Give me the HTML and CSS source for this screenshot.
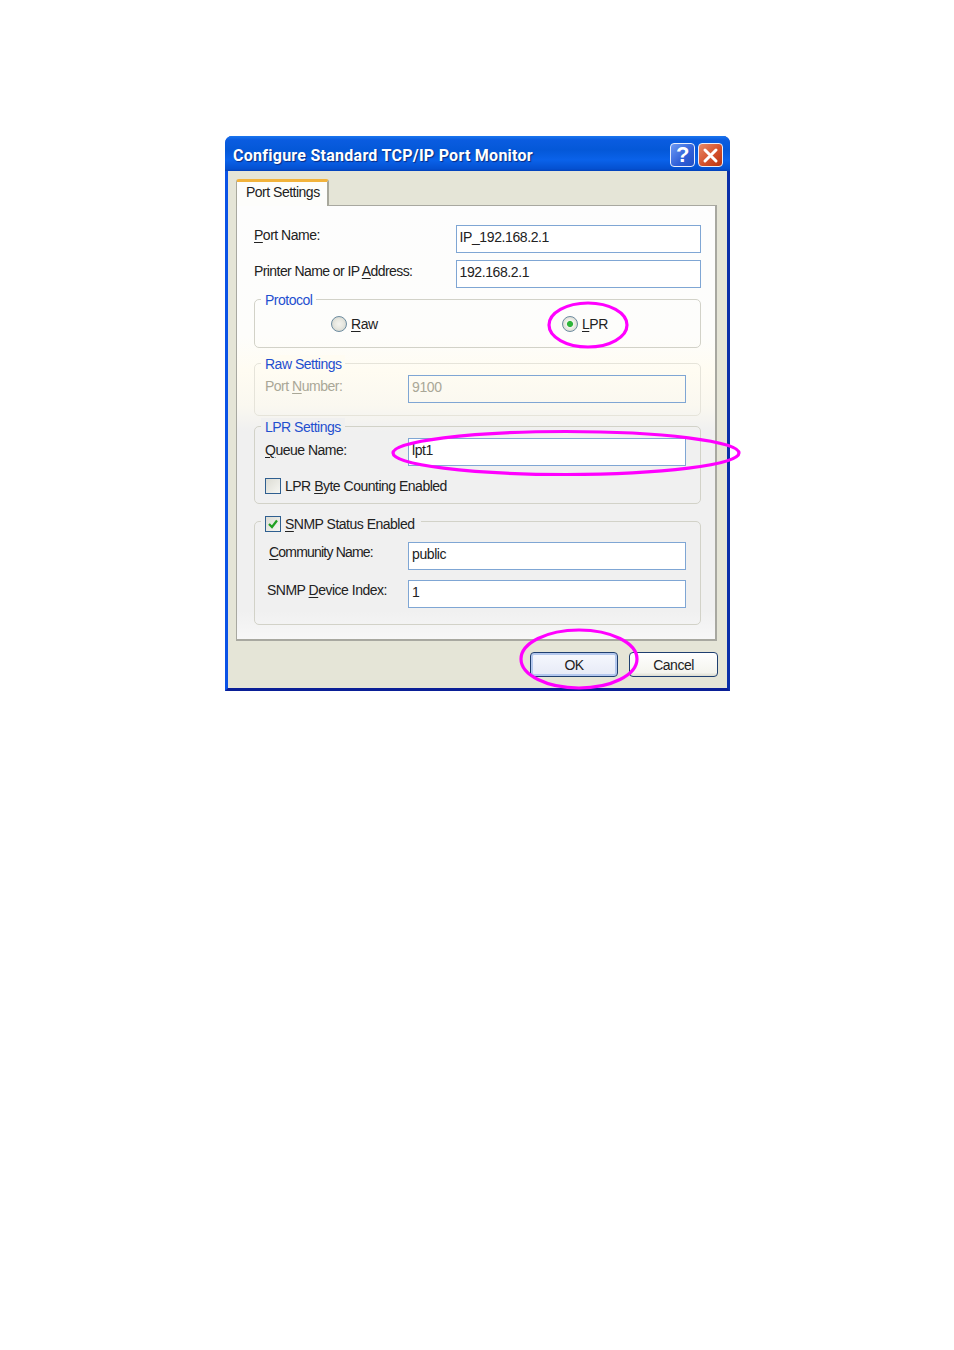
FILE: index.html
```html
<!DOCTYPE html>
<html lang="en">
  <head>
    <meta charset="UTF-8" />
    <title>Configure Standard TCP/IP Port Monitor</title>
    <link rel="stylesheet" href="styles.css">
  </head>
  <body>
    <!-- DIALOG -->
    <div class="window">
      <div class="titlebar">
        <span class="title">Configure Standard TCP/IP Port Monitor</span>
        <span class="title-btn title-btn-help">?</span>
        <span class="title-btn title-btn-close">
          <svg width="17" height="17" viewBox="0 0 17 17">
            <path d="M3 3 L14 14 M14 3 L3 14" stroke="#fff" stroke-width="3" stroke-linecap="round" fill="none" />
          </svg>
        </span>
      </div>

      <div class="body">
        <div class="tabs">
          <div class="tab">Port Settings</div>
        </div>

        <div class="panel">
          <div class="row row-top">
            <span class="label label-wide"><u>P</u>ort Name:</span>
            <div class="field field-wide">IP_192.168.2.1</div>
          </div>
          <div class="row row-next">
            <span class="label label-wide label-low label-tight">Printer Name or IP <u>A</u>ddress:</span>
            <div class="field field-wide">192.168.2.1</div>
          </div>

          <!-- PROTOCOL -->
          <div class="group group-protocol">
            <span class="legend">Protocol</span>
            <div class="radios">
              <span class="radio-item"><span class="radio"></span><span><u>R</u>aw</span></span>
              <span class="radio-item"><span class="radio radio-on"></span><span><u>L</u>PR</span></span>
            </div>
          </div>

          <!-- RAW -->
          <div class="group group-raw">
            <span class="legend">Raw Settings</span>
            <div class="row">
              <span class="label label-low disabled">Port <u>N</u>umber:</span>
              <div class="field field-disabled">9100</div>
            </div>
          </div>

          <!-- LPR -->
          <div class="group group-lpr">
            <span class="legend">LPR Settings</span>
            <div class="row">
              <span class="label label-lower"><u>Q</u>ueue Name:</span>
              <div class="field">lpt1</div>
            </div>
            <div class="check-row">
              <span class="check"></span>
              <span class="check-text">LPR <u>B</u>yte Counting Enabled</span>
            </div>
          </div>

          <!-- SNMP -->
          <div class="group group-snmp">
            <span class="legend legend-check">
              <span class="check">
                <svg width="14" height="14" viewBox="0 0 14 14">
                  <path d="M3 7 L6 10 L11 3.5" stroke="#21a121" stroke-width="2.2" fill="none" />
                </svg>
              </span>
              <span class="legend-text"><u>S</u>NMP Status Enabled</span>
            </span>
            <div class="row">
              <span class="label label-community"><u>C</u>ommunity Name:</span>
              <div class="field">public</div>
            </div>
            <div class="row row-snmp">
              <span class="label label-device">SNMP <u>D</u>evice Index:</span>
              <div class="field">1</div>
            </div>
          </div>
        </div>

        <div class="buttons">
          <div class="btn btn-default">OK</div>
          <div class="btn">Cancel</div>
        </div>
      </div>
    </div>

    <!-- HIGHLIGHT RINGS -->
    <svg class="marks" width="954" height="1350" viewBox="0 0 954 1350">
      <ellipse cx="588" cy="325" rx="39" ry="22" />
      <ellipse cx="566" cy="453" rx="173" ry="21.5" />
      <ellipse cx="579" cy="659" rx="58" ry="29" />
    </svg>
  </body>
</html>
```

FILE: styles.css
```css
/* PAGE */
html,
body {
  margin: 0;
  padding: 0;
  background: #fff;
}
*,
*::before,
*::after {
  box-sizing: border-box;
}
body {
  position: relative;
  width: 954px;
  height: 1350px;
  padding: 136px 0 0 225px;
  font-family: "Liberation Sans", Arial, sans-serif;
  font-size: 14px;
  letter-spacing: -0.5px;
  color: #222;
}
u {
  text-underline-offset: 2px;
}

/* WINDOW */
.window {
  width: 505px;
  height: 555px;
  display: flex;
  flex-direction: column;
  background: #0a50e0;
  border-radius: 7px 7px 0 0;
  border-left: 3px solid #0a52e6;
  border-right: 3px solid #0a2fa8;
  border-bottom: 3px solid #0a1f96;
}

/* TITLE BAR */
.titlebar {
  height: 35px;
  margin: 0 -3px;
  padding: 7px 7px 0 8px;
  display: flex;
  align-items: flex-start;
  gap: 3px;
  border-radius: 7px 7px 0 0;
  background: linear-gradient(#1a76ee 0, #0a5ce0 4px, #0458d8 14px, #0a62ea 24px, #0450d0 33px, #0340b8 35px);
}
.title {
  flex: 1;
  font-family: Roboto, "Liberation Sans", sans-serif;
  font-weight: bold;
  font-size: 16px;
  line-height: 26px;
  letter-spacing: 0.26px;
  color: #fff;
  text-shadow: 1px 1px 1px #0a2a80;
}
.title-btn {
  width: 25px;
  height: 24px;
  display: flex;
  align-items: center;
  justify-content: center;
  border: 1px solid #e8eefc;
  border-radius: 4px;
}
.title-btn-help {
  background: linear-gradient(135deg, #6c9af4, #2f5fd8 60%, #2450c4);
  font-weight: bold;
  font-size: 22px;
  color: #fff;
}
.title-btn-close {
  background: linear-gradient(135deg, #e88a68, #d4512c 55%, #b83410);
}

/* BODY */
.body {
  flex: 1;
  padding: 0 10px 0 8px;
  background: #e5e5d7;
}

/* TABS */
.tabs {
  height: 34px;
  padding-top: 8px;
  display: flex;
}
.tab {
  position: relative;
  z-index: 1;
  width: 93px;
  height: 27px;
  padding: 0 0 0 9px;
  line-height: 20px;
  background: #fdfdfb;
  border-top: 3px solid #f2b33c;
  border-left: 1px solid #a8a89c;
  border-right: 2px solid #a8a89c;
  border-radius: 3px 3px 0 0;
}

/* PANEL */
.panel {
  height: 436px;
  padding: 0 14px 0 17px;
  border: 1px solid #a8a8a0;
  border-right-width: 2px;
  border-bottom-width: 2px;
  background: linear-gradient(#fdfdfd 0, #fdfdfb 130px, #fffcf2 165px, #faf8f0 200px, #f0f0f0 225px, #f0f0f0 405px, #f8f8f8 436px);
}

/* ROWS */
.row {
  display: flex;
  align-items: flex-start;
}
.row-top {
  margin-top: 19px;
}
.row-next {
  margin-top: 7px;
}
.row-snmp {
  margin-top: 10px;
}
.label {
  width: 143px;
  line-height: 20px;
}
.label-wide {
  width: 202px;
}
.label-tight {
  letter-spacing: -0.58px;
}
.label-low {
  padding-top: 1px;
}
.label-lower {
  padding-top: 2px;
}
.label-community {
  padding-left: 4px;
  letter-spacing: -0.8px;
}
.label-device {
  padding-left: 2px;
}
.disabled {
  color: #a9a797;
}
.field {
  width: 278px;
  height: 28px;
  padding: 0 0 4px 3px;
  line-height: 22px;
  letter-spacing: -0.4px;
  background: #fff;
  border: 1px solid #7fa6d4;
}
.field-wide {
  width: 246px;
}
.field-disabled {
  background: transparent;
  color: #a9a797;
}

/* GROUPS */
.group {
  position: relative;
  border: 1px solid #d2d2c8;
  border-radius: 5px;
  padding-left: 10px;
}
.group-protocol {
  height: 49px;
  margin-top: 11px;
}
.group-raw {
  height: 53px;
  margin-top: 15px;
  padding-top: 11px;
  border-color: #e6e4da;
}
.group-lpr {
  height: 78px;
  margin-top: 10px;
  padding-top: 11px;
}
.group-snmp {
  height: 104px;
  margin-top: 17px;
  padding-top: 20px;
}
.legend {
  position: absolute;
  top: -9px;
  left: 6px;
  padding: 0 4px;
  line-height: 18px;
  color: #1f4fcf;
  background: #f6f6f2;
}
.group-protocol .legend {
  background: #fdfdfb;
}
.group-raw .legend {
  background: #fffcf2;
}
.group-lpr .legend {
  background: #f0f0f0;
}
.legend-check {
  top: -7px;
  display: flex;
  align-items: center;
  gap: 4px;
  padding-right: 6px;
  color: #222;
  background: #f0f0f0;
}

/* RADIOS */
.radios {
  display: grid;
  grid-template-columns: 231px 1fr;
  padding: 15px 0 0 66px;
}
.radio-item {
  display: flex;
  align-items: center;
  gap: 4px;
  line-height: 16px;
}
.radio {
  width: 16px;
  height: 16px;
  border: 1.5px solid #6d8ca0;
  border-radius: 50%;
  background: radial-gradient(circle, #f4f4f0 0, #e8e8e0 45%, #c8ccc8 100%);
}
.radio-on {
  background: radial-gradient(circle, #2fb53a 0, #2fb53a 26%, #f4f4f0 36%, #e8e8e0 55%, #c8ccc8 100%);
}
.radio-item:last-child {
  padding-top: 1px;
}

/* CHECKBOXES */
.check-row {
  display: flex;
  align-items: center;
  gap: 4px;
  margin-top: 11px;
  line-height: 16px;
}
.check-text {
  padding-top: 1px;
}
.check {
  width: 16px;
  height: 16px;
  display: flex;
  align-items: center;
  justify-content: center;
  border: 1px solid #2f5f90;
  background: linear-gradient(135deg, #dcdcd4, #f6f6f2);
}

/* BUTTONS */
.buttons {
  display: flex;
  justify-content: flex-end;
  gap: 11px;
  margin-right: -1px;
  padding-top: 11px;
}
.btn {
  width: 89px;
  height: 25px;
  line-height: 24px;
  text-align: center;
  background: linear-gradient(#fff, #f4f4ee 85%, #dcdcd0);
  border: 1px solid #1f3f70;
  border-radius: 4px;
}
.btn-default {
  width: 88px;
  box-shadow: inset 0 0 0 2px #b4c8ee;
  background: linear-gradient(#f6f8fe, #e6eaf6);
}

/* MAGENTA RINGS OVER THE DIALOG */
.marks {
  position: absolute;
  top: 0;
  left: 0;
  pointer-events: none;
}
.marks ellipse {
  fill: none;
  stroke: #ff00ff;
  stroke-width: 3.2;
}
```
